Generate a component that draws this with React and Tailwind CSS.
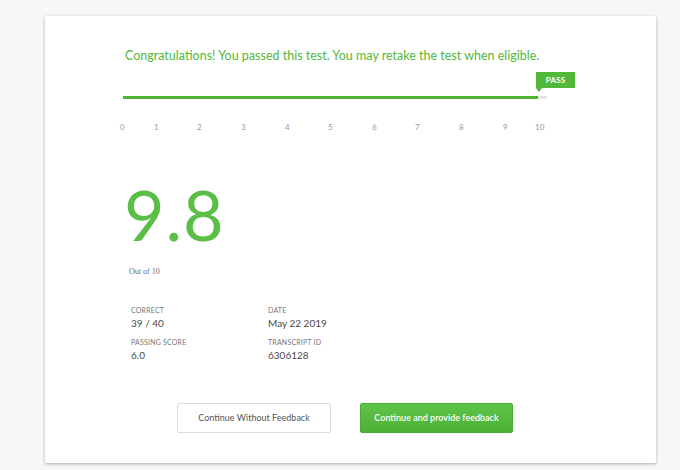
const ticks = [
  ["0", "w-[34px]"],
  ["1", "w-[43px]"],
  ["2", "w-[44px]"],
  ["3", "w-[44px]"],
  ["4", "w-[43px]"],
  ["5", "w-[44px]"],
  ["6", "w-[43px]"],
  ["7", "w-[44px]"],
  ["8", "w-[44px]"],
  ["9", "w-[32px]"],
  ["10", "w-[12px]"],
];

const Stat = ({ label, value }) => (
  <div className="flex flex-col">
    <span className="text-[7px] leading-[10px] uppercase text-[#777] tracking-[0.2px]">{label}</span>
    <span className="text-[10px] leading-[14px] text-[#4a4a4a] mt-[1px]">{value}</span>
  </div>
);

export default function App() {
  return (
    <div className="w-[680px] h-[470px] bg-[#f7f7f7] pt-[16px] pl-[45px] font-['Lato',sans-serif]">
      <div className="w-[611px] h-[447px] bg-white shadow-[0_1px_3px_rgba(0,0,0,0.3)] pl-[78px] pt-[31px]">
        <p className="text-[12.5px] leading-[18px] text-[#52b83a] ml-[2px]">
          Congratulations! You passed this test. You may retake the test when eligible.
        </p>

        <div className="relative w-[424px] h-[3px] bg-[#e6e6e6] mt-[31px]">
          <div className="w-[415px] h-[3px] bg-[#4fb536]" />
          <div className="absolute left-[413px] top-[-24px] w-[39px] h-[16px] bg-[#52b83a] flex items-center justify-center">
            <span className="text-[8px] font-bold text-white tracking-[0.2px]">PASS</span>
            <div className="absolute left-[0px] bottom-[-4px] w-0 h-0 border-l-[3px] border-r-[3px] border-t-[4px] border-l-transparent border-r-transparent border-t-[#52b83a]" />
          </div>
        </div>

        <div className="flex mt-[23px] ml-[-3px] text-[8px] leading-[10px] text-[#999]">
          {ticks.map(([n, w]) => (
            <span key={n} className={w}>{n}</span>
          ))}
        </div>

        <div className="mt-[42px] ml-[1px] text-[70px] leading-[80px] text-[#5bbf47] font-normal tracking-[1px]">
          9.8
        </div>

        <p className="mt-[13px] ml-[6px] text-[8px] leading-[10px] text-[#666] font-['Liberation_Serif',serif]">
          Out of 10
        </p>

        <div className="grid grid-cols-[137px_137px] gap-y-[7px] ml-[8px] mt-[28px]">
          <Stat label="Correct" value="39 / 40" />
          <Stat label="Date" value="May 22 2019" />
          <Stat label="Passing Score" value="6.0" />
          <Stat label="Transcript ID" value="6306128" />
        </div>

        <div className="flex gap-[29px] ml-[54px] mt-[41px]">
          <button className="w-[154px] h-[30px] bg-white border border-[#dcdcdc] rounded-[2px] text-[9px] text-[#555]">
            Continue Without Feedback
          </button>
          <button className="w-[153px] h-[30px] rounded-[2px] bg-gradient-to-b from-[#5fc44a] to-[#4cb034] border border-[#4aab33] text-[9px] font-semibold text-white">
            Continue and provide feedback
          </button>
        </div>
      </div>
    </div>
  );
}
